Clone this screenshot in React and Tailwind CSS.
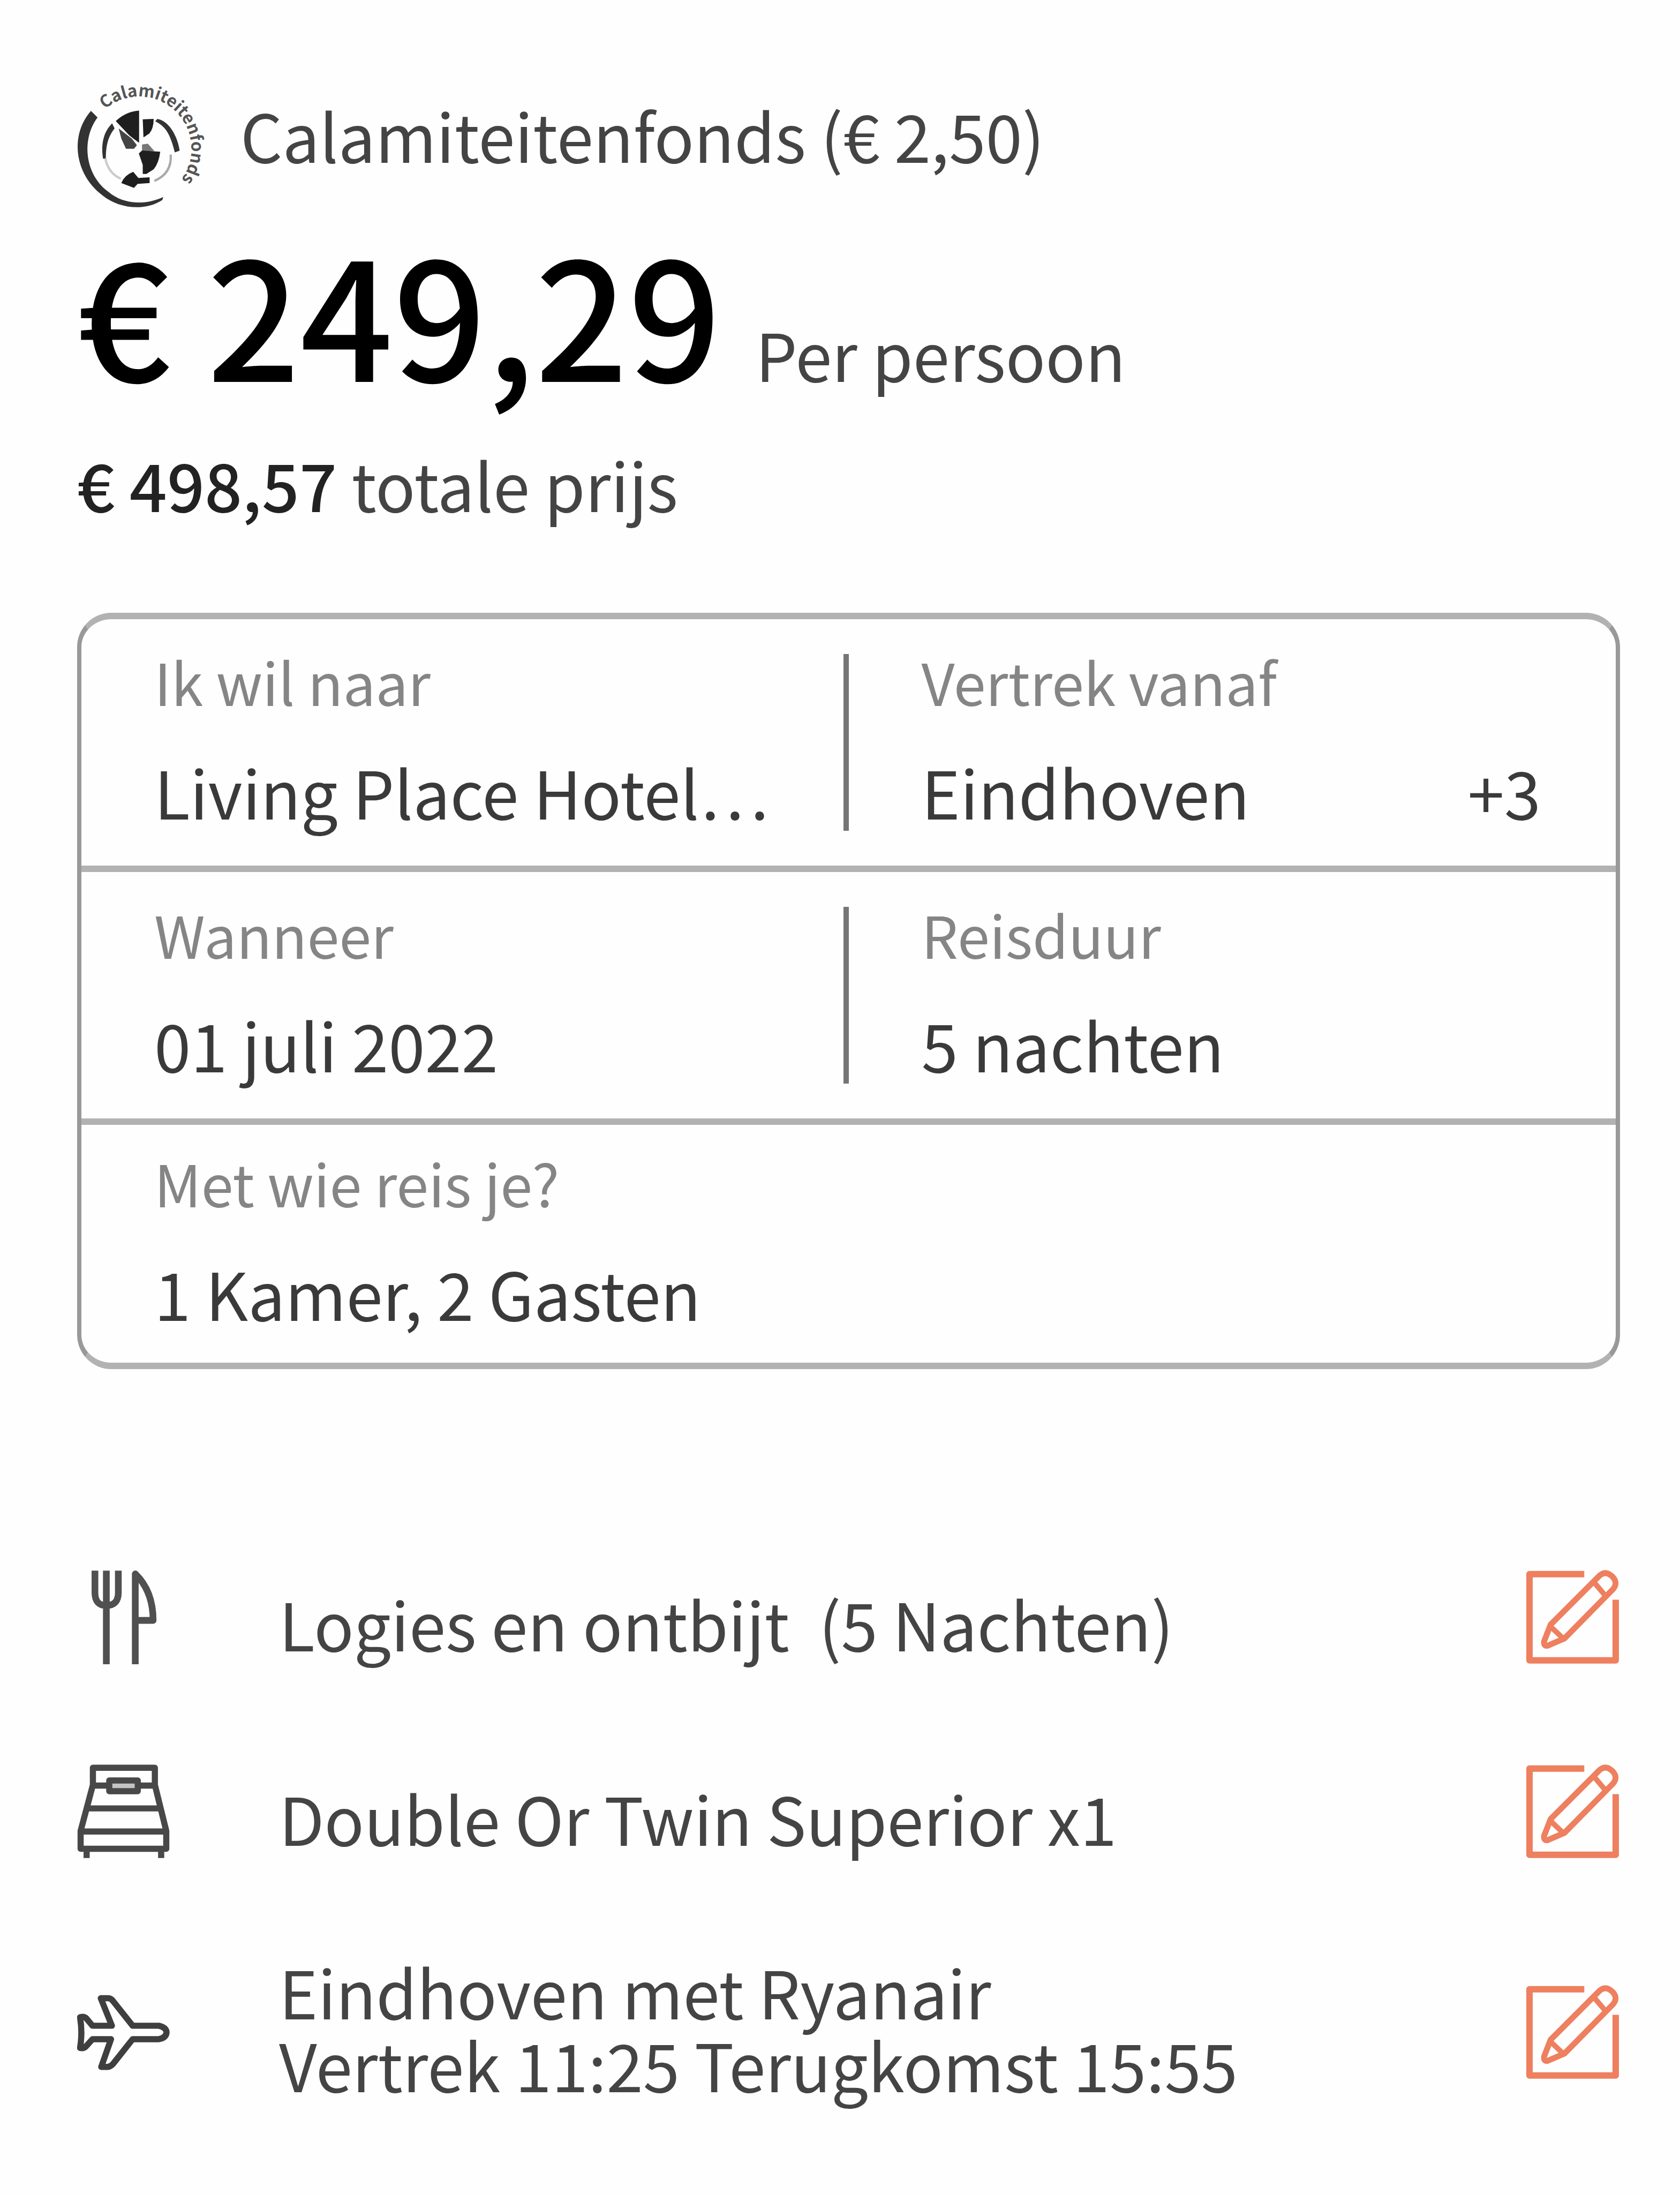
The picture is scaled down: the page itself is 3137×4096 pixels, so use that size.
const textFont = "font-['Noto_Sans_CJK_KR','Noto_Sans_CJK_SC',sans-serif]";

function FundLogo() {
  return (
    <svg viewBox="115 100 885 860" className="w-[241px] shrink-0 overflow-visible" aria-hidden="true">
      <defs>
        <path id="ring" d="M305 270A358 358 0 1 1 719 850" />
      </defs>
      <text fontSize="115" fontWeight="700" fill="#555">
        <textPath href="#ring">Calamiteitenfonds</textPath>
      </text>
      <path
        fill="#333"
        d="M210 280C60 450 100 720 290 860C400 950 580 970 700 890L705 870C580 930 430 920 330 835C170 720 140 480 255 325Z"
      />
      <g fill="#1f1f1f">
        <path d="M380 350Q450 285 540 278V498Q505 475 470 445Z" />
        <path fill="#444" d="M400 400L490 470L525 515L505 540H450L418 470Z" />
        <path d="M565 338L640 335Q640 400 610 435L570 462Z" />
        <path fill="#777" d="M560 510L600 505L645 555H560Z" />
        <path d="M538 572L560 552L685 560Q675 640 640 680L590 712H565V650Z" />
        <path d="M418 775Q440 720 500 698L535 740L612 735V775L530 780L505 808Z" />
        <path fill="#333" d="M355 365C290 430 278 520 293 608H312C312 520 325 460 372 400Z" />
        <path fill="#333" d="M650 352C730 390 755 450 785 565L818 553C805 460 750 350 665 335Z" />
      </g>
      <g fill="none" strokeWidth="16">
        <path d="M308 605Q330 710 415 745" stroke="#ccc" />
        <path d="M757 580Q765 710 645 760" stroke="#aaa" />
      </g>
    </svg>
  );
}

function Cutlery() {
  return (
    <svg viewBox="50 145 645 645" className="size-44" fill="none" stroke="#505050" strokeWidth="46" aria-hidden="true">
      <path d="M172 150V300Q172 388 250 388Q332 388 332 300V150M250 150V790" />
      <path d="M448 790V172Q570 290 570 490H448" strokeLinejoin="round" />
    </svg>
  );
}

function Bed() {
  return (
    <svg viewBox="80 135 645 645" className="size-44" fill="none" stroke="#484848" strokeWidth="42" strokeLinejoin="round" aria-hidden="true">
      <path d="M188 275V158H612V275L690 590V712H104V590Z" />
      <path d="M188 280H300M500 280H612M150 436H650M104 594H690M145 712V775M655 712V775" />
      <path d="M300 245H495V318H300Z" fill="#c4c4c4" />
    </svg>
  );
}

function Plane() {
  return (
    <svg viewBox="80 100 645 645" className="size-44" fill="none" stroke="#3f3f3f" strokeWidth="42" strokeLinejoin="round" aria-hidden="true">
      <path d="M318 378L242 190H295Q310 190 325 208L460 378H640Q690 390 692 423Q690 460 640 470H460L325 640Q305 660 285 660H245L312 470H185L140 520Q125 535 100 530Q118 425 100 320Q130 312 145 330L185 378Z" />
    </svg>
  );
}

function EditIcon() {
  return (
    <svg viewBox="147 122 640 645" className="size-44" fill="none" stroke="#ee7f5f" strokeWidth="44" strokeLinejoin="round" aria-hidden="true">
      <path d="M545 150H170V740H760V325" />
      <path d="M315 495L650 160Q690 125 735 165Q780 210 740 255L410 590L295 640Q265 645 270 610Z" strokeWidth="40" />
      <path d="M615 210L695 305M315 510L400 590" strokeWidth="36" />
    </svg>
  );
}

function Field({ label, value, extra, divided }) {
  return (
    <button
      type="button"
      className={
        "block min-w-0 pl-34 text-left " + (divided ? "border-r-10 border-[#757575] pr-16" : "pr-[140px]")
      }
    >
      <span className="block text-[108px] leading-[100px] text-[#858585]">{label}</span>
      <span className="mt-20 flex justify-between text-[123px] leading-[150px] text-[#3a3a3a]">
        <span className="whitespace-nowrap">{value}</span>
        {extra && <span>{extra}</span>}
      </span>
    </button>
  );
}

function Extra({ icon, lines, label, className }) {
  return (
    <li className={"flex items-center " + className}>
      <span className="w-[377px] shrink-0">{icon}</span>
      <p className={"flex-1 whitespace-pre text-[123px] leading-[136px] " + (lines.length > 1 ? "pb-5" : "pt-5")}>
        {lines.map((line) => (
          <span key={line} className="block">
            {line}
          </span>
        ))}
      </p>
      <button type="button" aria-label={label} className="shrink-0">
        <EditIcon />
      </button>
    </li>
  );
}

export default function App() {
  return (
    <main className={"min-h-screen bg-[#fefefe] pt-[158px] pr-28 pb-24 pl-36 text-[#444] " + textFont}>
      <header>
        <div className="flex items-start gap-16">
          <FundLogo />
          <p className="pt-4 text-[123px] leading-[152px]">Calamiteitenfonds (€ 2,50)</p>
        </div>
        <p className="mt-12 flex items-baseline gap-16 leading-[280px]">
          <strong className="text-[305px] font-medium text-black">€ 249,29</strong>
          <span className="text-[123px]">Per persoon</span>
        </p>
        <p className="mt-7 text-[123px] leading-[150px]">
          <strong className="font-medium text-[#222]">€ 498,57</strong> totale prijs
        </p>
      </header>

      <section className="mt-[167px] divide-y-12 divide-[#b2b2b2] rounded-[64px] border-x-8 border-y-12 border-x-[#999] border-y-[#b2b2b2]">
        <div className="grid grid-cols-2 py-[65px]">
          <Field label="Ik wil naar" value="Living Place Hotel…" divided />
          <Field label="Vertrek vanaf" value="Eindhoven" extra="+3" />
        </div>
        <div className="grid grid-cols-2 py-[65px]">
          <Field label="Wanneer" value="01 juli 2022" divided />
          <Field label="Reisduur" value="5 nachten" />
        </div>
        <div className="grid py-[57px]">
          <Field label="Met wie reis je?" value="1 Kamer, 2 Gasten" />
        </div>
      </section>

      <ul>
        <Extra
          className="mt-[375px]"
          icon={<Cutlery />}
          lines={["Logies en ontbijt  (5 Nachten)"]}
          label="Verzorging wijzigen"
        />
        <Extra
          className="mt-[187px]"
          icon={<Bed />}
          lines={["Double Or Twin Superior x1"]}
          label="Kamer wijzigen"
        />
        <Extra
          className="mt-[178px]"
          icon={<Plane />}
          lines={["Eindhoven met Ryanair", "Vertrek 11:25 Terugkomst 15:55"]}
          label="Vlucht wijzigen"
        />
      </ul>
    </main>
  );
}
